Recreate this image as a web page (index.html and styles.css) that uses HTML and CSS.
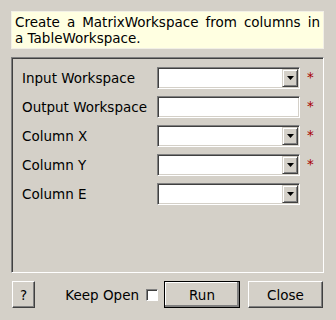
FILE: index.html
```html
<!DOCTYPE html>
<html lang="en">
<head>
  <meta charset="UTF-8" />
  <title>ConvertTableToMatrixWorkspace</title>
  <link rel="stylesheet" href="styles.css">
</head>
<body>

  <p class="description"><span class="line">Create a MatrixWorkspace from columns in</span> a TableWorkspace.</p>

  <div class="frame">
    <div class="props">
      <label>Input Workspace</label>
      <div class="combo"><span class="drop"><svg width="7" height="4" viewBox="0 0 7 4"><polygon points="0,0 7,0 3.5,4" fill="#000"/></svg></span></div>
      <span class="req">*</span>

      <label>Output Workspace</label>
      <div class="text-field"></div>
      <span class="req">*</span>

      <label>Column X</label>
      <div class="combo"><span class="drop"><svg width="7" height="4" viewBox="0 0 7 4"><polygon points="0,0 7,0 3.5,4" fill="#000"/></svg></span></div>
      <span class="req">*</span>

      <label>Column Y</label>
      <div class="combo"><span class="drop"><svg width="7" height="4" viewBox="0 0 7 4"><polygon points="0,0 7,0 3.5,4" fill="#000"/></svg></span></div>
      <span class="req">*</span>

      <label>Column E</label>
      <div class="combo"><span class="drop"><svg width="7" height="4" viewBox="0 0 7 4"><polygon points="0,0 7,0 3.5,4" fill="#000"/></svg></span></div>
      <span class="req"></span>
    </div>
  </div>

  <div class="buttons">
    <button class="btn help">?</button>
    <span class="spacer"></span>
    <span class="keep">Keep Open</span>
    <span class="check"></span>
    <button class="btn run">Run</button>
    <button class="btn close">Close</button>
  </div>

</body>
</html>
```

FILE: styles.css
```css
* {
  box-sizing: border-box;
  margin: 0;
  padding: 0;
  font-family: 'DejaVu Sans', sans-serif;
  font-size: 13.5px;
}

html, body {
  width: 336px;
  height: 320px;
}

body {
  background-color: #d4d0c8;
  color: #000;
  padding: 11px 12px 12px 11px;
  display: flex;
  flex-direction: column;
}

.description {
  background-color: #ffffe1;
  border: 1px solid #f2f0e6;
  padding: 2px 3px;
  line-height: 16px;
  margin-bottom: 8px;
}

.description .line {
  display: block;
  text-align: justify;
  text-align-last: justify;
}

.frame {
  flex: 1;
  border: 1px solid;
  border-color: #808080 #fff #fff #808080;
  box-shadow: inset 1px 1px #404040, inset -1px -1px #d4d0c8;
  padding: 9px 10px;
}

.props {
  display: grid;
  grid-template-columns: 135px 143px 1fr;
  grid-auto-rows: 22px;
  row-gap: 7px;
  align-items: center;
}

.combo, .text-field {
  height: 22px;
  background: #fff;
  border: 1px solid;
  border-color: #808080 #fff #fff #808080;
  box-shadow: inset 1px 1px #404040, inset -1px -1px #d4d0c8;
  padding: 1px;
  display: flex;
  justify-content: flex-end;
}

.drop {
  width: 16px;
  height: 18px;
  background: #d4d0c8;
  border: 1px solid;
  border-color: #d4d0c8 #404040 #404040 #d4d0c8;
  box-shadow: inset 1px 1px #fff, inset -1px -1px #808080;
  display: flex;
  align-items: center;
  justify-content: center;
}

.req {
  color: #a80000;
  padding-left: 7px;
  line-height: 20px;
  align-self: start;
}

.buttons {
  display: flex;
  align-items: center;
  height: 27px;
  margin-top: 8px;
  padding: 0 1px;
}

.btn {
  height: 27px;
  background: #d4d0c8;
  border: 1px solid;
  border-color: #fff #404040 #404040 #fff;
  box-shadow: inset -1px -1px #808080;
  color: #000;
}

.help {
  width: 23px;
}

.spacer {
  flex: 1;
}

.keep {
  margin-right: 7px;
}

.check {
  width: 12px;
  height: 12px;
  background: #fff;
  border: 1px solid;
  border-color: #808080 #fff #fff #808080;
  box-shadow: inset 1px 1px #404040;
  margin-right: 6px;
}

.run {
  width: 76px;
  margin-right: 8px;
  box-shadow: inset -2px -2px #808080, inset 1px 1px #fff;
  border-color: #000;
}

.close {
  width: 75px;
}
```
